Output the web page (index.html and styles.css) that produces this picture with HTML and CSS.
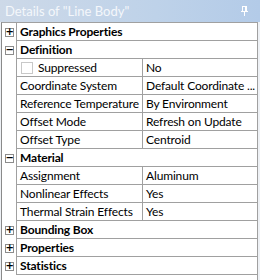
FILE: index.html
```html
<!DOCTYPE html>
<html>
<head>
  <meta name="viewport" content="width=device-width, initial-scale=1.0">
  <link rel="stylesheet" href="styles.css">
</head>
<body>
  <div class="panel">
    <div class="titlebar">
      <span class="title">Details of "Line Body"</span>
      <svg class="pin" width="9" height="10" viewBox="0 0 9 10">
        <rect x="2" y="0" width="5" height="1" fill="#fff"/>
        <rect x="2" y="0" width="1" height="6" fill="#fff"/>
        <rect x="5" y="0" width="2" height="6" fill="#fff"/>
        <rect x="1" y="5" width="7" height="1" fill="#fff"/>
        <rect x="4" y="6" width="1" height="4" fill="#fff"/>
      </svg>
    </div>

    <div class="grid">
      <div class="row header">
        <div class="gutter"><span class="toggle">+</span></div>
        <div class="head">Graphics Properties</div>
      </div>

      <div class="row header">
        <div class="gutter"><span class="toggle">−</span></div>
        <div class="head">Definition</div>
      </div>
      <div class="row">
        <div class="gutter"></div>
        <div class="name"><span class="check"></span>Suppressed</div>
        <div class="value">No</div>
      </div>
      <div class="row">
        <div class="gutter"></div>
        <div class="name">Coordinate System</div>
        <div class="value">Default Coordinate ...</div>
      </div>
      <div class="row">
        <div class="gutter"></div>
        <div class="name">Reference Temperature</div>
        <div class="value">By Environment</div>
      </div>
      <div class="row">
        <div class="gutter"></div>
        <div class="name">Offset Mode</div>
        <div class="value">Refresh on Update</div>
      </div>
      <div class="row">
        <div class="gutter"></div>
        <div class="name">Offset Type</div>
        <div class="value">Centroid</div>
      </div>

      <div class="row header">
        <div class="gutter"><span class="toggle">−</span></div>
        <div class="head">Material</div>
      </div>
      <div class="row">
        <div class="gutter"></div>
        <div class="name">Assignment</div>
        <div class="value">Aluminum</div>
      </div>
      <div class="row">
        <div class="gutter"></div>
        <div class="name">Nonlinear Effects</div>
        <div class="value">Yes</div>
      </div>
      <div class="row">
        <div class="gutter"></div>
        <div class="name">Thermal Strain Effects</div>
        <div class="value">Yes</div>
      </div>

      <div class="row header">
        <div class="gutter"><span class="toggle">+</span></div>
        <div class="head">Bounding Box</div>
      </div>
      <div class="row header">
        <div class="gutter"><span class="toggle">+</span></div>
        <div class="head">Properties</div>
      </div>
      <div class="row header">
        <div class="gutter"><span class="toggle">+</span></div>
        <div class="head">Statistics</div>
      </div>
    </div>
  </div>
</body>
</html>
```

FILE: styles.css
```css
* {
  box-sizing: border-box;
}
body {
  margin: 0;
  background: #eef1f5;
  font-family: Lato, 'Noto Sans', sans-serif;
  font-size: 12px;
  color: #000;
}
.panel {
  width: 260px;
  height: 280px;
  display: flex;
  flex-direction: column;
}
.titlebar {
  height: 22px;
  display: flex;
  align-items: center;
  justify-content: space-between;
  padding: 0 11px 0 5px;
  background: linear-gradient(90deg, #cdd9e8 0%, #bed2e9 60%, #b3cbe8 100%);
}
.title {
  color: #f4f7fb;
  font-size: 13px;
}
.pin {
  display: block;
}
.grid {
  flex: 1;
  width: 257px;
  margin-left: 1px;
  background: #fff;
  border-top: 1px solid #a0a0a0;
  border-left: 1px solid #8a8a8a;
  border-right: 1px solid #a0a0a0;
}
.row {
  display: flex;
  height: 18px;
}
.gutter {
  width: 14px;
  display: flex;
  align-items: center;
  justify-content: center;
}
.toggle {
  width: 9px;
  height: 9px;
  border: 1px solid #8c8c8c;
  background: #fff;
  font-size: 10px;
  line-height: 6px;
  font-weight: bold;
  text-align: center;
  font-family: 'DejaVu Sans', sans-serif;
}
.head, .name, .value {
  border-left: 1px solid #a0a0a0;
  border-bottom: 1px solid #a0a0a0;
  padding-left: 3px;
  line-height: 17px;
  white-space: nowrap;
  overflow: hidden;
  letter-spacing: -0.15px;
}
.head {
  flex: 1;
  font-weight: bold;
}
.name {
  width: 126px;
  display: flex;
  align-items: center;
}
.value {
  flex: 1;
}
.check {
  width: 12px;
  height: 12px;
  border: 1px solid #c8c8c8;
  background: #fff;
  margin: 0 5px 0 1px;
}
```
